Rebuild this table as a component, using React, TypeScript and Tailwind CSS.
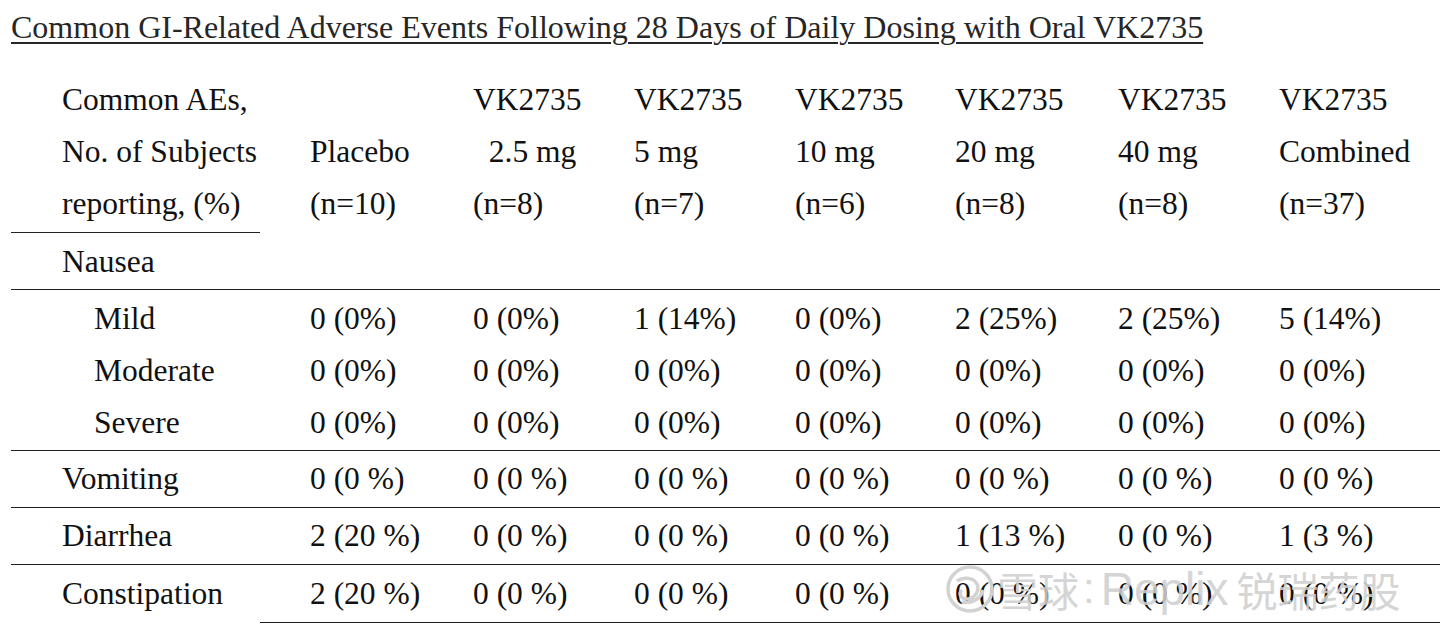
const cols = ['w-[299px]', 'w-[163px]', 'w-[161px]', 'w-[161px]', 'w-[160px]', 'w-[163px]', 'w-[161px]', 'w-[161px]'];

const header: string[][] = [
  ['Common AEs,', 'No. of Subjects', 'reporting, (%)'],
  ['', 'Placebo', '(n=10)'],
  ['VK2735', '\u00a0\u00a02.5 mg', '(n=8)'],
  ['VK2735', '5 mg', '(n=7)'],
  ['VK2735', '10 mg', '(n=6)'],
  ['VK2735', '20 mg', '(n=8)'],
  ['VK2735', '40 mg', '(n=8)'],
  ['VK2735', 'Combined', '(n=37)'],
];

const nausea: string[][] = [
  ['Mild', '0 (0%)', '0 (0%)', '1 (14%)', '0 (0%)', '2 (25%)', '2 (25%)', '5 (14%)'],
  ['Moderate', '0 (0%)', '0 (0%)', '0 (0%)', '0 (0%)', '0 (0%)', '0 (0%)', '0 (0%)'],
  ['Severe', '0 (0%)', '0 (0%)', '0 (0%)', '0 (0%)', '0 (0%)', '0 (0%)', '0 (0%)'],
];

const others: string[][] = [
  ['Vomiting', '0 (0 %)', '0 (0 %)', '0 (0 %)', '0 (0 %)', '0 (0 %)', '0 (0 %)', '0 (0 %)'],
  ['Diarrhea', '2 (20 %)', '0 (0 %)', '0 (0 %)', '0 (0 %)', '1 (13 %)', '0 (0 %)', '1 (3 %)'],
  ['Constipation', '2 (20 %)', '0 (0 %)', '0 (0 %)', '0 (0 %)', '0 (0 %)', '0 (0 %)', '0 (0 %)'],
];

function Row({ cells, indent = false, className = '' }: { cells: string[]; indent?: boolean; className?: string }) {
  return (
    <div className={`flex items-center ${className}`}>
      {cells.map((c, i) => (
        <div key={i} className={`${cols[i]} shrink-0 whitespace-pre ${i === 0 ? (indent ? 'pl-[83px]' : 'pl-[51px]') : ''}`}>
          {c}
        </div>
      ))}
    </div>
  );
}

// faint site watermark over the bottom-right corner
function Watermark() {
  return (
    <div className="pointer-events-none absolute left-[945px] top-[564px] flex h-[50px] items-center whitespace-nowrap text-[#cfcfcf]/90">
      <svg width="50" height="50" viewBox="0 0 50 50" fill="none" stroke="#d2d2d2" strokeWidth="3.5">
        <circle cx="25" cy="25" r="22" />
        <path d="M12 17c7-5 17-3 20 3s-2 15-10 15c-6 0-9-5-5-9" />
        <path d="M17 38c9 2 19-3 21-12" />
      </svg>
      <span className="ml-[2px] text-[41px] leading-none font-['Noto_Sans_CJK_SC',sans-serif]">雪球</span>
      <span className="ml-[4px] text-[42px] leading-none font-['Liberation_Sans',sans-serif]">:</span>
      <span className="ml-[6px] text-[46px] leading-none font-['Liberation_Sans',sans-serif]">Replix</span>
      <span className="ml-[8px] text-[41px] leading-none font-['Noto_Sans_CJK_SC',sans-serif]">锐瑞药股</span>
    </div>
  );
}

export default function App() {
  return (
    <div className="relative w-[1456px] h-[632px] overflow-hidden bg-white font-['Liberation_Serif','Times_New_Roman',serif] text-[#111]">
      <div className="pl-[11px] pt-[7px] text-[32px] leading-[40px] text-[#262626] underline decoration-2 underline-offset-[4px]">
        Common GI-Related Adverse Events Following 28 Days of Daily Dosing with Oral VK2735
      </div>

      <div className="ml-[11px] mt-[27px] w-[1429px] text-[31.5px]">
        <div className="flex leading-[52px]">
          {header.map((lines, i) => (
            <div key={i} className={`${cols[i]} shrink-0 ${i === 0 ? 'pl-[51px]' : ''}`}>
              {lines.map((l, j) => (
                <div key={j} className="whitespace-pre h-[52px]">{l || '\u00a0'}</div>
              ))}
            </div>
          ))}
        </div>
        <div className="mt-[2px] w-[249px] border-t border-[#222]" />
        <Row cells={['Nausea', '', '', '', '', '', '', '']} className="h-[57px] pt-[2px] border-b border-[#222]" />
        <div className="pt-[3px] pb-[1px] border-b border-[#222]">
          {nausea.map((r) => (
            <Row key={r[0]} cells={r} indent className="h-[52px]" />
          ))}
        </div>
        {others.map((r, i) => (
          <Row
            key={r[0]}
            cells={r}
            className={`h-[57px] ${i < 2 ? 'border-b border-[#222]' : ''}`}
          />
        ))}
        <div className="ml-[249px] border-t border-[#222]" />
      </div>

      <Watermark />
    </div>
  );
}
